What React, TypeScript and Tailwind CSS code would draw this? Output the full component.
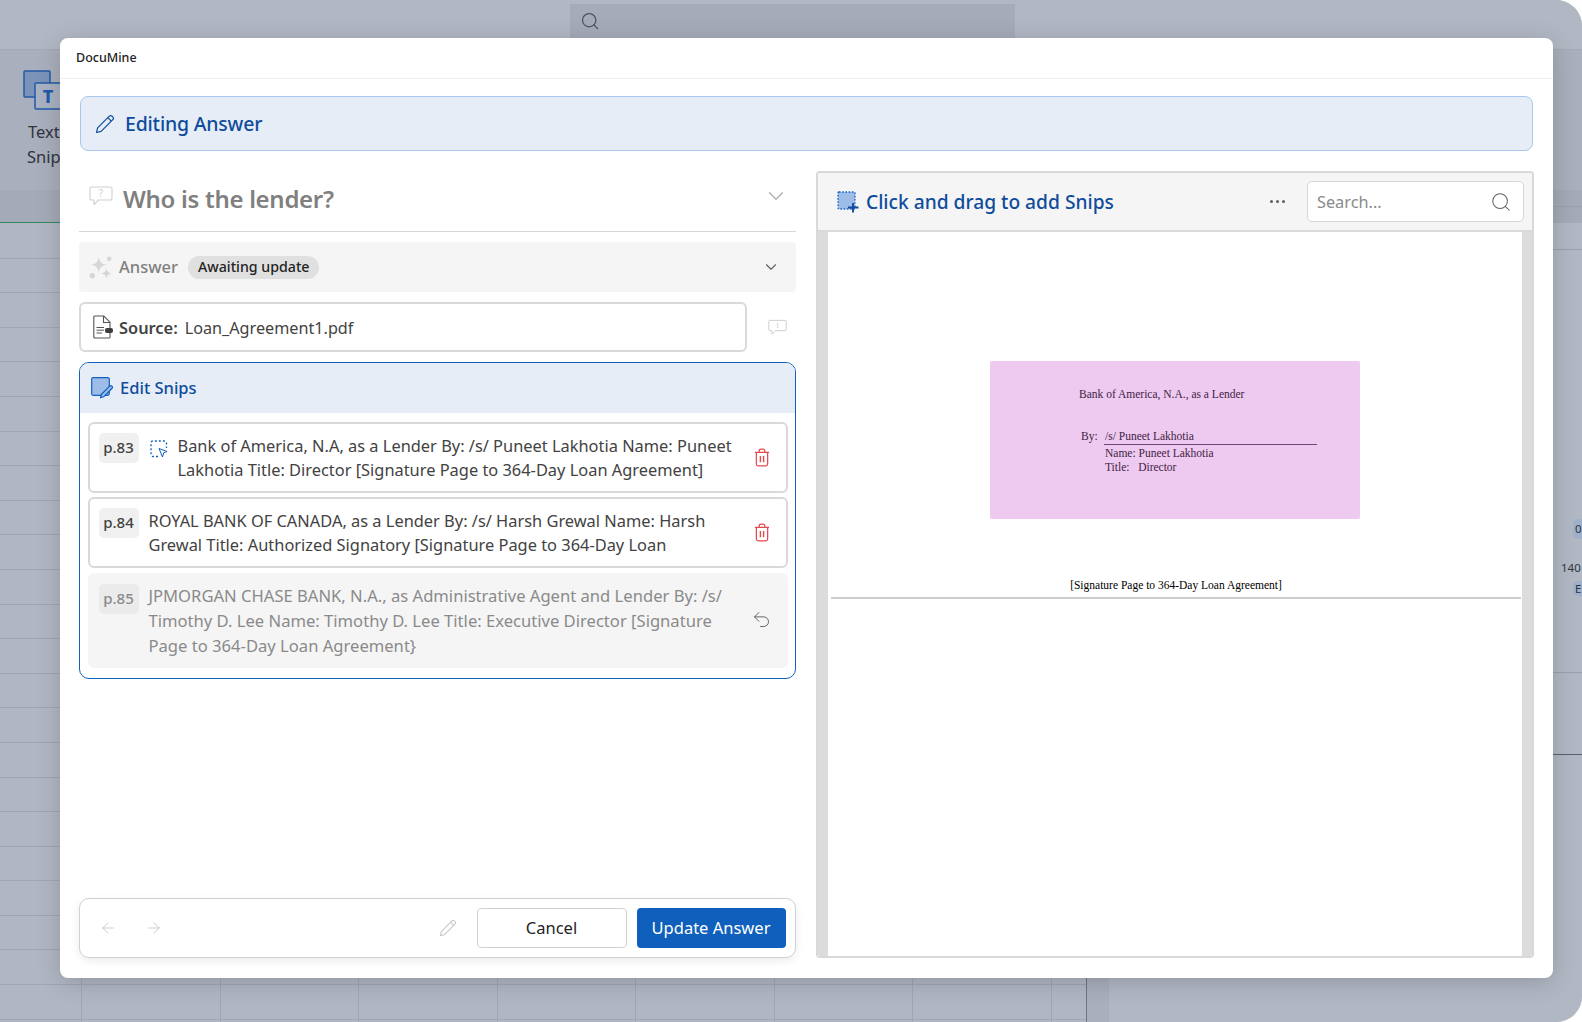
import { ArrowLeft, ArrowRight, ChevronDown, Search, Undo2 } from "lucide-react";

const snips = [
  {
    page: "p.83",
    lines: [
      "Bank of America, N.A, as a Lender By: /s/ Puneet Lakhotia Name: Puneet",
      "Lakhotia Title: Director [Signature Page to 364-Day Loan Agreement]",
    ],
    added: true,
  },
  {
    page: "p.84",
    lines: [
      "ROYAL BANK OF CANADA, as a Lender By: /s/ Harsh Grewal Name: Harsh",
      "Grewal Title: Authorized Signatory [Signature Page to 364-Day Loan",
    ],
    added: false,
  },
];

const removedLines = [
  "JPMORGAN CHASE BANK, N.A., as Administrative Agent and Lender By: /s/",
  "Timothy D. Lee Name: Timothy D. Lee Title: Executive Director [Signature",
  "Page to 364-Day Loan Agreement}",
];

function PencilIcon({ className }: { className?: string }) {
  return (
    <svg viewBox="0 0 20 20" fill="none" stroke="currentColor" strokeWidth="1.2" strokeLinejoin="round" className={className}>
      <path d="M1.5 18.5l1.1-4.6L14.3 2.2a2 2 0 0 1 2.8 0l.7.7a2 2 0 0 1 0 2.8L6.1 17.4l-4.6 1.1z" />
      <path d="M12.8 3.7l3.5 3.5" />
    </svg>
  );
}

function ChatIcon({ mark, className }: { mark: string; className?: string }) {
  return (
    <svg viewBox="0 0 24 20" fill="none" stroke="currentColor" strokeWidth="1.1" strokeLinejoin="round" className={className}>
      <path d="M2.5 1h19A1.5 1.5 0 0 1 23 2.5v10a1.5 1.5 0 0 1-1.5 1.5H9.5L5 18.5V14H2.5A1.5 1.5 0 0 1 1 12.500v-10A1.5 1.5 0 0 1 2.500 1z" />
      <text x="12" y="11" fontSize="10" textAnchor="middle" fill="currentColor" stroke="none" fontFamily="Noto Sans, sans-serif">
        {mark}
      </text>
    </svg>
  );
}

function SparkleIcon({ className }: { className?: string }) {
  return (
    <svg viewBox="0 0 22 22" fill="currentColor" className={className}>
      <path d="M9 1.500c.7 5 2.500 6.800 7.500 7.500-5 .7-6.800 2.500-7.500 7.500C8.300 11.500 6.500 9.700 1.500 9 6.500 8.300 8.300 6.500 9 1.500z" />
      <path d="M16 12c.4 3.200 1.500 4.300 5 5-3.500.7-4.600 1.800-5 5-.4-3.200-1.500-4.300-5-5 3.500-.7 4.600-1.800 5-5z" />
      <circle cx="18.500" cy="3.500" r="2.200" />
      <circle cx="3" cy="19" r="2.400" />
    </svg>
  );
}

function DocIcon({ className }: { className?: string }) {
  return (
    <svg viewBox="0 0 21 24" fill="none" className={className}>
      <path d="M2.800 1h9L18 7.200V22a1 1 0 0 1-1 1H2.800a1 1 0 0 1-1-1V2a1 1 0 0 1 1-1z" stroke="#555" strokeWidth="1.100" />
      <path d="M11.500 1v6.500H18" stroke="#555" strokeWidth="1.100" />
      <path d="M4.500 12.500h7.500M4.500 15.200h7.500M4.500 18h5.500" stroke="#555" strokeWidth="1" />
      <rect x="13" y="13" width="8" height="5" rx="2" fill="#3d3d3d" />
    </svg>
  );
}

function EditSnipsIcon({ className }: { className?: string }) {
  return (
    <svg viewBox="0 0 22 22" fill="none" className={className}>
      <rect x="0.700" y="0.700" width="17.600" height="17.600" rx="1.500" fill="#9dbce8" stroke="#1160c0" strokeWidth="1.200" />
      <path d="M9.500 20.800l.8-3.300 8.300-8.300a1.600 1.600 0 0 1 2.300 2.300L12.600 19.800l-3.100 1z" fill="#9dbce8" stroke="#1160c0" strokeWidth="1.200" strokeLinejoin="round" />
    </svg>
  );
}

function SnipCursorIcon({ className }: { className?: string }) {
  return (
    <svg viewBox="0 0 18 18" fill="none" stroke="#1160c0" className={className}>
      <path d="M8 16.500H3A2 2 0 0 1 1 14.500V3a2 2 0 0 1 2-2h11.500a2 2 0 0 1 2 2v5" strokeWidth="1.300" strokeDasharray="2 2" />
      <path d="M9 8.500l8 3-3.300 1.300L12.500 17 9 8.500z" strokeWidth="1" strokeLinejoin="round" />
    </svg>
  );
}

function AddSnipIcon({ className }: { className?: string }) {
  return (
    <svg viewBox="0 0 22 22" fill="none" className={className}>
      <rect x="1" y="1" width="17" height="17" rx="1" fill="#9dbce8" stroke="#1160c0" strokeWidth="1.300" strokeDasharray="1.600 1.600" />
      <path d="M16 12v9.500M11 16.500h10.500" stroke="#0f4c9c" strokeWidth="1.900" />
    </svg>
  );
}

function TrashIcon({ className }: { className?: string }) {
  return (
    <svg viewBox="0 0 17 20" fill="none" stroke="#e5484d" strokeWidth="1.300" strokeLinejoin="round" className={className}>
      <path d="M1 4.500h15M5.500 4.500V3a2 2 0 0 1 2-2h2a2 2 0 0 1 2 2v1.500" />
      <path d="M2.500 4.500V17a2 2 0 0 0 2 2h8a2 2 0 0 0 2-2V4.500" />
      <path d="M6.800 8.500v6.500M10.200 8.500v6.500" strokeWidth="1.500" />
    </svg>
  );
}

function SnipIcon() {
  return (
    <svg viewBox="0 0 40 40" fill="none" className="h-[40px] w-[40px]">
      <rect x="1" y="1" width="26" height="26" rx="1" fill="#7b93b8" stroke="#1f5ba8" strokeWidth="1.500" />
      <rect x="12" y="13" width="28" height="26" rx="1" fill="#a9b2c2" stroke="#1f5ba8" strokeWidth="1.500" />
      <text x="25" y="33" fontSize="18" fontWeight="800" textAnchor="middle" fill="#1f5ba8" fontFamily="Noto Sans, sans-serif">
        T
      </text>
    </svg>
  );
}

function Background() {
  return (
    <div className="flex h-full flex-col overflow-hidden rounded-r-[26px] bg-[#b0b7c3]">
      <div className="flex h-[50px] shrink-0 justify-center border-b border-[#a2a8b4] bg-[#b1b8c4] pl-[2px]">
        <div className="mt-[4px] flex h-[34px] w-[445px] items-center bg-[#a5abb9] pl-[10px] text-[#4b5260]">
          <Search className="size-[20px]" strokeWidth={1.5} />
        </div>
      </div>
      <div className="h-[140px] shrink-0 bg-[#a9afbc] pl-[23px] pt-[20px] text-[16.500px] leading-[25px] text-[#30343c]">
        <SnipIcon />
        <div className="mt-[9px] pl-[5px]">Text</div>
        <div className="pl-[4px]">Snip</div>
      </div>
      <div className="flex h-[33px] shrink-0 bg-[#a4aab7]">
        <div className="flex-1 border-b border-[#2f8a5a]" />
        <div className="h-[17px] w-[40px] border-b border-[#9aa1ae]" />
      </div>
      <div className="flex min-h-0 flex-1">
        <div className="w-[1087px] shrink-0 border-r border-[#6f7683] pt-[1px]">
          {Array.from({ length: 24 }).map((_, row) => (
            <div key={row} className="flex h-[34.6px] border-b border-[#a0a7b3]">
              <div className="w-[82px] shrink-0 border-r border-[#a0a7b3]" />
              {Array.from({ length: 7 }).map((_, col) => (
                <div key={col} className="w-[138.500px] shrink-0 border-r border-[#a0a7b3]" />
              ))}
            </div>
          ))}
        </div>
        <div className="w-[22px] shrink-0 bg-[#a9afbc]" />
        <div className="flex flex-1 flex-col items-end bg-[#b1b8c4] text-[11.500px] text-[#30343c]">
          <div className="h-[27px] w-full border-b border-[#9aa1ae]" />
          <div className="mt-[269px] flex h-[20px] w-[9px] items-center overflow-hidden rounded-l-[5px] bg-[#9fb0cb] pl-[2px]">0</div>
          <div className="mt-[22px] w-[21px] whitespace-nowrap leading-[14px]">140</div>
          <div className="mt-[6px] flex h-[15px] w-[9px] items-center overflow-hidden rounded-l-[5px] bg-[#9fb0cb] pl-[2px]">E</div>
          <div className="mt-[76px] h-px w-full bg-[#9aa1ae]" />
          <div className="mt-[81px] h-px w-full bg-[#5a606c]" />
        </div>
      </div>
    </div>
  );
}

function SnipRow({ page, lines, added }: { page: string; lines: string[]; added: boolean }) {
  return (
    <div className="flex h-[71px] items-start rounded-[6px] border-2 border-[#d9d9d9] bg-white pl-[9px] pt-[9px]">
      <span className="flex h-[30px] w-[40px] shrink-0 items-center justify-center rounded-[5px] bg-[#f0f0f0] text-[15px] font-medium text-[#424242]">
        {page}
      </span>
      {added ? <SnipCursorIcon className="ml-[11px] mt-[7px] size-[18px] shrink-0" /> : null}
      <div className="ml-[10px] mt-[1px] min-w-0 flex-1 text-[16.400px] leading-[24.500px] text-[#424242]">
        {lines.map((line) => (
          <div key={line} className="whitespace-nowrap">
            {line}
          </div>
        ))}
      </div>
      <TrashIcon className="mx-[16px] mt-[15px] h-[19px] w-[16px] shrink-0" />
    </div>
  );
}

function EditPanel() {
  return (
    <div className="flex w-[717px] shrink-0 flex-col">
      <div className="flex h-[61px] items-center border-b border-[#d6d6d6] pb-[5px] pl-[10px] pr-[7px] text-[#808080]">
        <ChatIcon mark="?" className="-mt-[5px] h-[22px] w-[24px] text-[#d0d0d0]" />
        <h2 className="ml-[10px] flex-1 text-[24px] font-semibold leading-none tracking-[-0.3px]">Who is the lender?</h2>
        <ChevronDown className="-mt-[5px] size-[26px] text-[#b0b0b0]" strokeWidth={1.25} />
      </div>
      <div className="mt-[10px] flex h-[50px] items-center rounded-[4px] bg-[#f5f5f5] pl-[10px] pr-[16px]">
        <SparkleIcon className="size-[24px] text-[#d6d6d6]" />
        <span className="ml-[6px] text-[16.500px] font-medium text-[#808080]">Answer</span>
        <span className="ml-[10px] flex h-[23px] items-center rounded-full bg-[#e0e0e0] px-[10px] text-[14.200px] font-medium text-[#242424]">
          Awaiting update
        </span>
        <ChevronDown className="ml-auto size-[18px] text-[#616161]" strokeWidth={1.5} />
      </div>
      <div className="mt-[10px] flex items-center">
        <div className="flex h-[50px] w-[668px] items-center rounded-[6px] border-2 border-[#d9d9d9] pl-[11px]">
          <DocIcon className="h-[24px] w-[21px]" />
          <span className="ml-[6px] pt-[2px] text-[16.400px] font-semibold text-[#424242]">Source:</span>
          <span className="ml-[7px] pt-[2px] text-[16.200px] text-[#424242]">Loan_Agreement1.pdf</span>
        </div>
        <ChatIcon mark="!" className="ml-[21px] h-[19px] w-[19px] text-[#c8c8c8]" />
      </div>
      <div className="mt-[10px] flex h-[317px] flex-col overflow-hidden rounded-[10px] border-[1.500px] border-[#1160c0]">
        <div className="flex h-[50px] shrink-0 items-center bg-[#e6edf7] pl-[11px] text-[#0f4c9c]">
          <EditSnipsIcon className="size-[22px]" />
          <span className="ml-[7px] text-[16.500px] font-medium">Edit Snips</span>
        </div>
        <div className="flex flex-col gap-[4px] px-[7.500px] pt-[8.500px]">
          {snips.map((snip) => (
            <SnipRow key={snip.page} {...snip} />
          ))}
          <div className="mt-[1px] flex h-[95px] items-start rounded-[6px] bg-[#f5f5f5] pl-[11px] pt-[11px]">
            <span className="flex h-[30px] w-[40px] shrink-0 items-center justify-center rounded-[5px] bg-[#ebebeb] text-[15px] font-medium text-[#8a8a8a]">
              p.85
            </span>
            <div className="-mt-[1px] ml-[10px] min-w-0 flex-1 text-[16.600px] leading-[25px] text-[#8a8a8a]">
              {removedLines.map((line) => (
                <div key={line} className="whitespace-nowrap">
                  {line}
                </div>
              ))}
            </div>
            <Undo2 className="ml-[14px] mr-[16px] mt-[25px] size-[21px] shrink-0 text-[#616161]" strokeWidth={1.1} />
          </div>
        </div>
      </div>
      <div className="mt-auto flex h-[60px] items-center rounded-[10px] border-[1.500px] border-[#d1d1d1] bg-white pl-[19px] pr-[9.500px] shadow-[0_3px_8px_rgba(0,0,0,0.08)]">
        <ArrowLeft className="size-[18px] text-[#c8c8c8]" strokeWidth={1.25} />
        <ArrowRight className="ml-[28px] size-[18px] text-[#c8c8c8]" strokeWidth={1.25} />
        <PencilIcon className="ml-auto size-[18px] text-[#c8c8c8]" />
        <button className="ml-[20px] h-[40px] w-[150px] rounded-[4px] border-[1.500px] border-[#d1d1d1] bg-white text-[16.500px] text-[#242424]">
          Cancel
        </button>
        <button className="ml-[10px] h-[40px] w-[149px] rounded-[4px] bg-[#0f5fbd] text-[16.500px] text-white">Update Answer</button>
      </div>
    </div>
  );
}

function DocPanel() {
  return (
    <div className="flex min-w-0 flex-1 flex-col overflow-hidden rounded-[4px] border-2 border-[#d9d9d9]">
      <div className="flex h-[59px] shrink-0 items-center border-b-2 border-[#d9d9d9] bg-[#f5f5f5] pl-[19px] pr-[8px]">
        <AddSnipIcon className="size-[22px]" />
        <span className="ml-[7px] whitespace-nowrap pt-[2px] text-[19.200px] font-medium text-[#0f4c9c]">Click and drag to add Snips</span>
        <span className="ml-auto flex gap-[3px] pr-[22px]">
          <i className="size-[3px] rounded-full bg-[#616161]" />
          <i className="size-[3px] rounded-full bg-[#616161]" />
          <i className="size-[3px] rounded-full bg-[#616161]" />
        </span>
        <div className="flex h-[41px] w-[217px] items-center rounded-[5px] border-[1.500px] border-[#d6d6d6] bg-white pl-[9px] pr-[11px]">
          <span className="flex-1 pt-[2px] text-[16.300px] text-[#8a8a8a]">Search...</span>
          <Search className="size-[22px] text-[#616161]" strokeWidth={1.1} />
        </div>
      </div>
      <div className="flex min-h-0 flex-1 bg-white">
        <div className="w-[10px] shrink-0 bg-[#dcdcdc]" />
        <div className="min-w-0 flex-1 pt-[129px] font-['Liberation_Serif',serif] text-[11.500px] text-black">
          <div className="ml-[162px] h-[158px] w-[370px] rounded-[2px] bg-[#eec9f0] pl-[89px] pt-[26px] leading-[14px] text-[#3f2444]">
            <div>Bank of America, N.A., as a Lender</div>
            <div className="mt-[28px] flex">
              <span className="ml-[2px] w-[23px]">By:</span>
              <div className="flex w-[213px] flex-col">
                <span className="border-b border-[#6a4a70] pl-[1px] leading-[15px]">/s/ Puneet Lakhotia</span>
                <span className="pl-[1px] pt-[1px]">Name: Puneet Lakhotia</span>
                <span className="pl-[1px]">Title:&nbsp;&nbsp; Director</span>
              </div>
            </div>
          </div>
          <div className="mt-[59px] pl-[2px] text-center leading-[14px]">[Signature Page to 364-Day Loan Agreement]</div>
          <div className="ml-[3px] mr-[1px] mt-[5px] h-[2px] bg-[#cccccc]" />
        </div>
        <div className="w-[10px] shrink-0 bg-[#dcdcdc]" />
      </div>
    </div>
  );
}

export default function App() {
  return (
    <div className="relative h-[1022px] w-[1582px] overflow-hidden bg-white font-['Noto_Sans',sans-serif]">
      <Background />
      <div className="absolute left-[60px] top-[38px] flex h-[940px] w-[1493px] flex-col rounded-[8px] bg-white shadow-[0_4px_24px_rgba(0,0,0,0.18)]">
        <div className="flex h-[41px] shrink-0 items-center border-b border-[#f0f0f0] pl-[16px] text-[12.500px] font-medium text-[#242424]">
          DocuMine
        </div>
        <div className="mx-[20px] mt-[17px] flex h-[55px] shrink-0 items-center rounded-[8px] border-[1.500px] border-[#a9c6ec] bg-[#e6edf7] pl-[14px] text-[#0f4c9c]">
          <PencilIcon className="size-[20px]" />
          <span className="ml-[10px] pt-[1px] text-[19.500px] font-medium tracking-[-0.2px]">Editing Answer</span>
        </div>
        <div className="flex min-h-0 flex-1 gap-[20px] pb-[20px] pl-[19px] pr-[19px] pt-[20px]">
          <EditPanel />
          <DocPanel />
        </div>
      </div>
    </div>
  );
}
